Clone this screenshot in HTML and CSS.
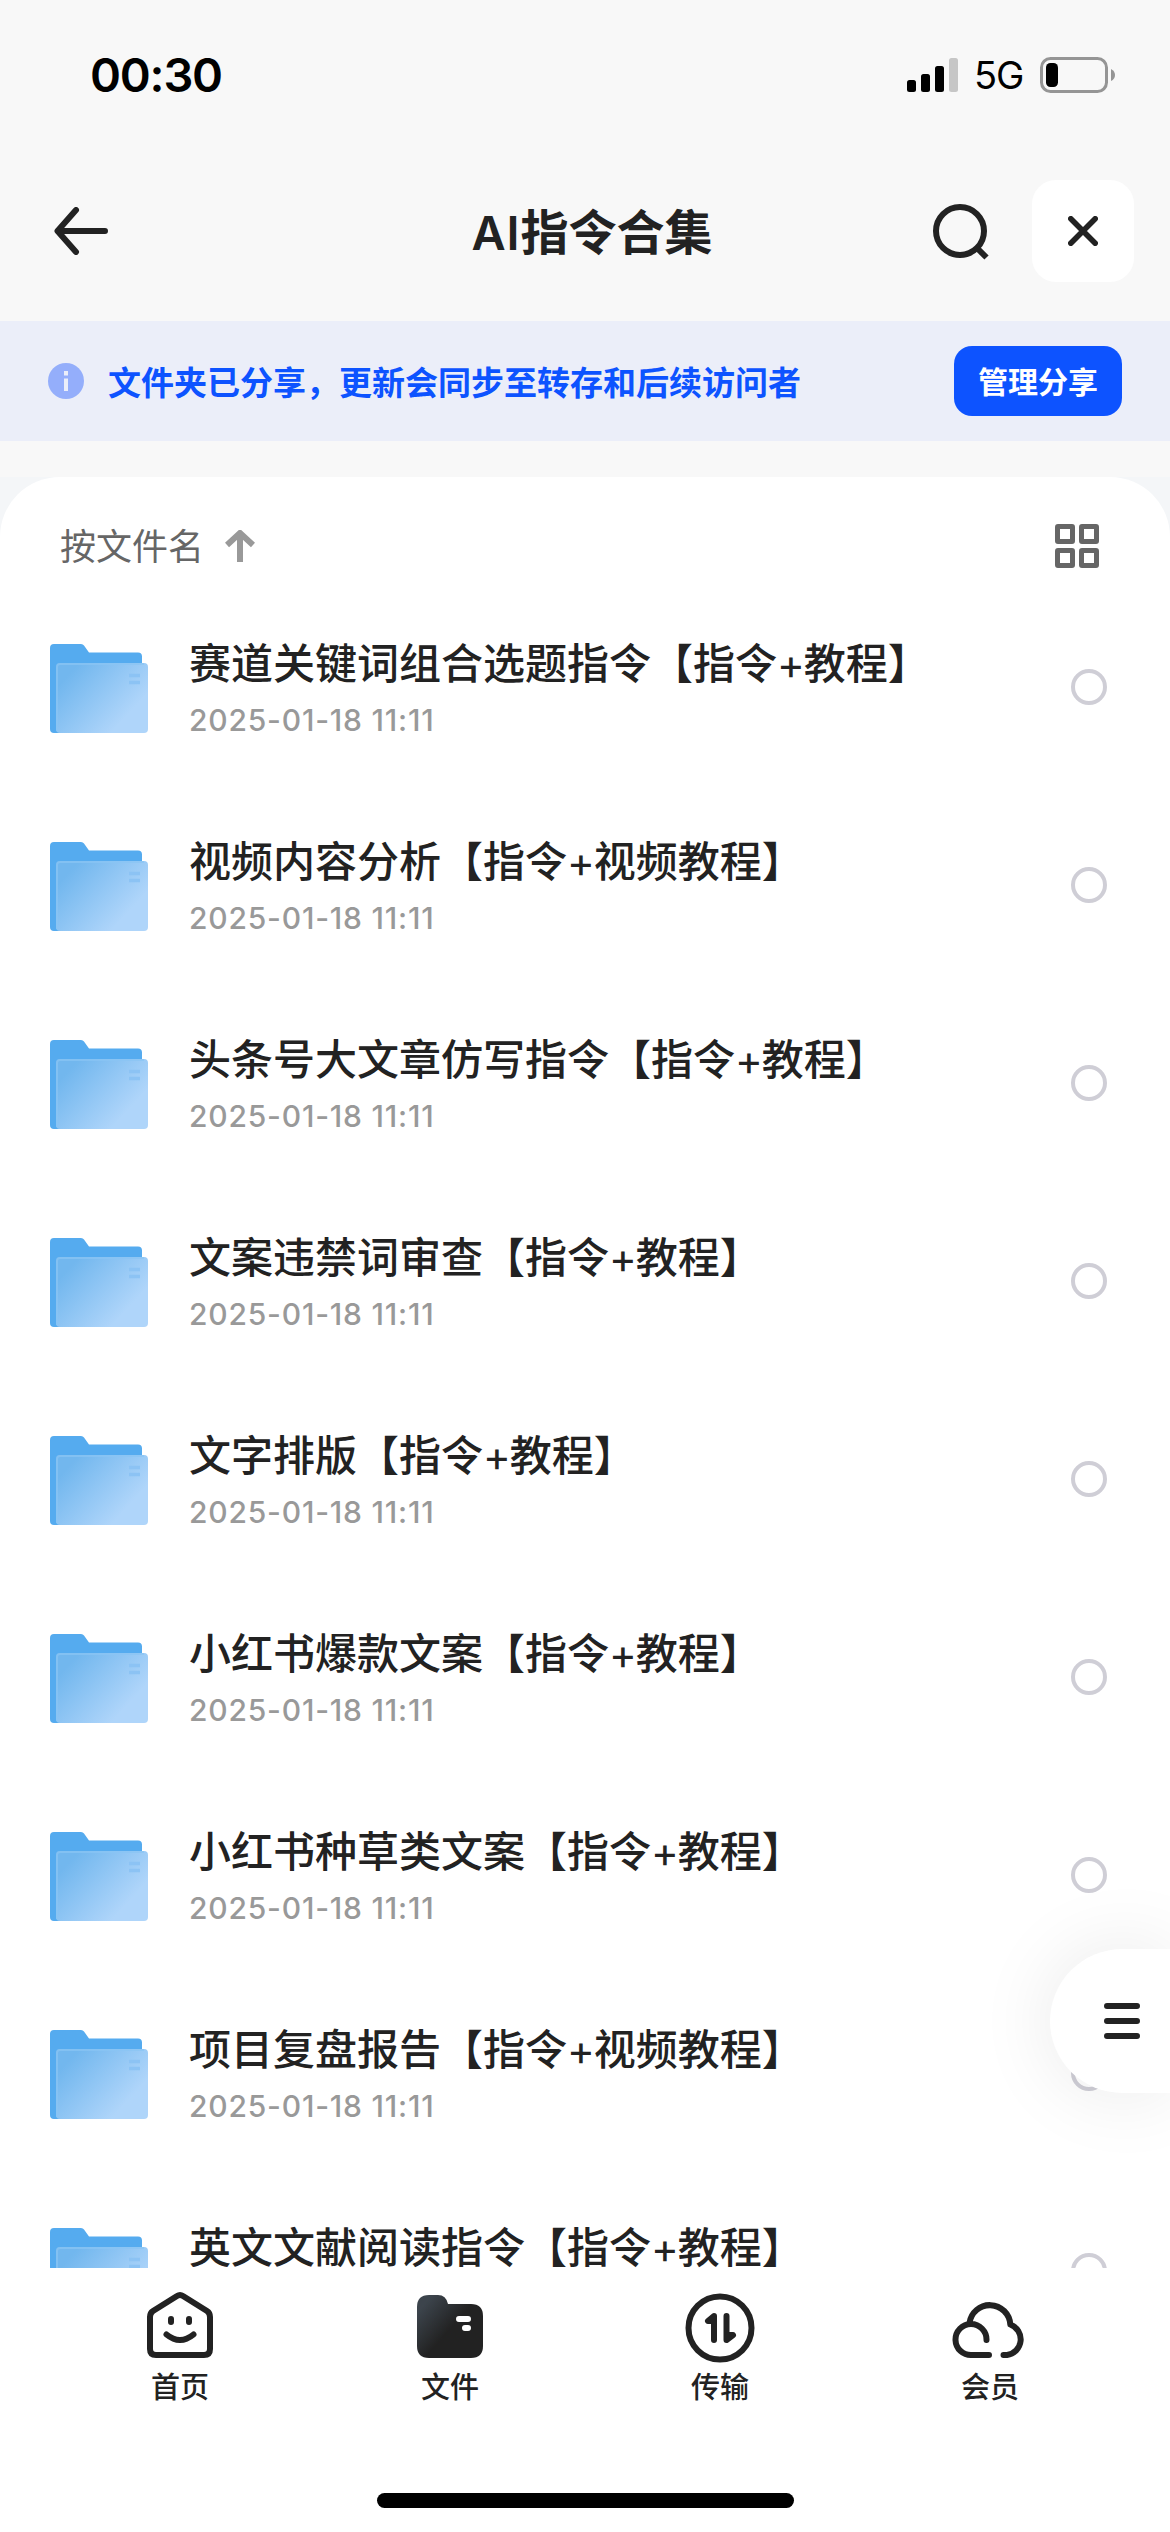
FILE: index.html
```html
<!doctype html>
<html lang="zh-CN">
  <head>
    <meta charset="UTF-8" />
    <meta name="viewport" content="width=device-width, initial-scale=1.0" />
    <title>AI指令合集</title>
    <link rel="stylesheet" href="styles.css">
  </head>
  <body>
    <!-- Iconos compartidos -->
    <svg class="sprite" width="0" height="0">
      <defs>
        <linearGradient id="folder-front" x1="0" y1="0.15" x2="1" y2="0.85">
          <stop offset="0.1" stop-color="#72b7ee"/>
          <stop offset="0.8" stop-color="#afd5fa"/>
        </linearGradient>
        <linearGradient id="files-dark" x1="0" y1="0.1" x2="0.6" y2="0.6">
          <stop offset="0.15" stop-color="#3c444c"/>
          <stop offset="0.85" stop-color="#222"/>
        </linearGradient>
      </defs>
      <symbol id="folder" viewBox="0 0 98 90">
        <path d="M0 4a4 4 0 0 1 4-4h27q2 0 3 1.500l5 7h49a4 4 0 0 1 4 4V60H10v29H4a4 4 0 0 1-4-4z" fill="#55abef"/>
        <rect x="6" y="19" width="92" height="70" rx="4" fill="url(#folder-front)"/>
        <path d="M7 87V23q0-3 3-3h84" fill="none" stroke="#8ac5f3" stroke-width="2" opacity="0.7"/>
        <path d="M79 31.500h11M79 38.500h11" stroke="#8cc3f4" stroke-width="3.500"/>
      </symbol>
    </svg>

    <div class="screen">
      <div class="status-bar">
        <span class="time">00:30</span>
        <div class="status-icons">
          <svg class="signal" viewBox="0 0 51 34">
            <rect x="0" y="22" width="9" height="12" rx="2.500"/>
            <rect x="14" y="16" width="9" height="18" rx="2.500"/>
            <rect x="28" y="8" width="9" height="26" rx="2.500"/>
            <rect x="42" y="0" width="9" height="34" rx="2.500" fill="#c6c6c6"/>
          </svg>
          <span class="network">5G</span>
          <svg class="battery" viewBox="0 0 75 36">
            <rect x="1.500" y="1.500" width="65" height="33" rx="9" fill="none" stroke="#959595" stroke-width="3"/>
            <rect x="6" y="6" width="12" height="24" rx="4.500"/>
            <path d="M71 12q4 2 4 6t-4 6z" fill="#959595"/>
          </svg>
        </div>
      </div>

      <header class="header">
        <svg class="back" viewBox="0 0 54 48">
          <path d="M51 24H4M22 3L3.500 24 22 45" fill="none" stroke="#222" stroke-width="6" stroke-linecap="round" stroke-linejoin="round"/>
        </svg>
        <h1 class="title"><span class="latin">AI</span>指令合集</h1>
        <div class="actions">
          <svg class="search" viewBox="0 0 60 60">
            <circle cx="28" cy="30" r="24" fill="none" stroke="#222" stroke-width="6"/>
            <path d="M44.500 46.500l10 10" stroke="#222" stroke-width="6"/>
          </svg>
          <div class="close">
            <svg viewBox="0 0 30 30">
              <path d="M2.800 2.800l24.400 24.400M27.200 2.800L2.800 27.200" stroke="#222" stroke-width="5.600" stroke-linecap="round"/>
            </svg>
          </div>
        </div>
      </header>

      <div class="banner">
        <svg class="info" viewBox="0 0 36 36">
          <circle cx="18" cy="18" r="18" fill="#94aefb"/>
          <path d="M16 8h4v4.500h-4zM16 15.500h4V28h-4z" fill="#ebeef9"/>
        </svg>
        <span class="banner-text">文件夹已分享，更新会同步至转存和后续访问者</span>
        <button class="manage">管理分享</button>
      </div>

      <main class="panel-wrap">
        <div class="panel">
          <div class="toolbar">
            <span class="sort">按文件名</span>
            <svg class="sort-arrow" viewBox="0 0 30 32">
              <path d="M15 32V4M2 15L15 3l13 12" fill="none" stroke="#999" stroke-width="6"/>
            </svg>
            <svg class="grid" viewBox="0 0 44 44">
              <g fill="none" stroke="#666" stroke-width="5">
                <rect x="2.500" y="2.500" width="15" height="15" rx="0.500"/>
                <rect x="26.500" y="2.500" width="15" height="15" rx="0.500"/>
                <rect x="2.500" y="26.500" width="15" height="15" rx="0.500"/>
                <rect x="26.500" y="26.500" width="15" height="15" rx="0.500"/>
              </g>
            </svg>
          </div>

          <ul class="list">
            <li class="row">
              <svg class="folder"><use href="#folder"/></svg>
              <div class="info-col"><p class="name">赛道关键词组合选题指令【指令<span class="plus">+</span>教程】</p><p class="date">2025-01-18 11:11</p></div>
              <span class="check"></span>
            </li>
            <li class="row">
              <svg class="folder"><use href="#folder"/></svg>
              <div class="info-col"><p class="name">视频内容分析【指令<span class="plus">+</span>视频教程】</p><p class="date">2025-01-18 11:11</p></div>
              <span class="check"></span>
            </li>
            <li class="row">
              <svg class="folder"><use href="#folder"/></svg>
              <div class="info-col"><p class="name">头条号大文章仿写指令【指令<span class="plus">+</span>教程】</p><p class="date">2025-01-18 11:11</p></div>
              <span class="check"></span>
            </li>
            <li class="row">
              <svg class="folder"><use href="#folder"/></svg>
              <div class="info-col"><p class="name">文案违禁词审查【指令<span class="plus">+</span>教程】</p><p class="date">2025-01-18 11:11</p></div>
              <span class="check"></span>
            </li>
            <li class="row">
              <svg class="folder"><use href="#folder"/></svg>
              <div class="info-col"><p class="name">文字排版【指令<span class="plus">+</span>教程】</p><p class="date">2025-01-18 11:11</p></div>
              <span class="check"></span>
            </li>
            <li class="row">
              <svg class="folder"><use href="#folder"/></svg>
              <div class="info-col"><p class="name">小红书爆款文案【指令<span class="plus">+</span>教程】</p><p class="date">2025-01-18 11:11</p></div>
              <span class="check"></span>
            </li>
            <li class="row">
              <svg class="folder"><use href="#folder"/></svg>
              <div class="info-col"><p class="name">小红书种草类文案【指令<span class="plus">+</span>教程】</p><p class="date">2025-01-18 11:11</p></div>
              <span class="check"></span>
            </li>
            <li class="row">
              <svg class="folder"><use href="#folder"/></svg>
              <div class="info-col"><p class="name">项目复盘报告【指令<span class="plus">+</span>视频教程】</p><p class="date">2025-01-18 11:11</p></div>
              <span class="check"></span>
            </li>
            <li class="row">
              <svg class="folder"><use href="#folder"/></svg>
              <div class="info-col"><p class="name">英文文献阅读指令【指令<span class="plus">+</span>教程】</p></div>
              <span class="check"></span>
            </li>
          </ul>
        </div>
      </main>

      <!-- Botón flotante -->
      <div class="fab">
        <svg viewBox="0 0 36 36">
          <path d="M3 3h30M3 18h30M3 33h30" stroke="#222" stroke-width="6" stroke-linecap="round"/>
        </svg>
      </div>

      <nav class="tabs">
        <div class="tab">
          <svg viewBox="0 0 90 90">
            <g fill="none" stroke="#222" stroke-width="6" stroke-linecap="round" stroke-linejoin="round">
              <path d="M42 16q3-2 6 0l24 15q3 2 3 6v32q0 6-6 6H21q-6 0-6-6V37q0-4 3-6z"/>
              <path d="M31.500 54.500q13.500 11 27 0"/>
              <path d="M36 39v3M54 39v3"/>
            </g>
          </svg>
          <span>首页</span>
        </div>
        <div class="tab">
          <svg viewBox="0 0 90 90">
            <path d="M12 27q0-12 12-12h9q8 0 10 9h23q12 0 12 12v30q0 12-12 12H24q-12 0-12-12z" fill="url(#files-dark)"/>
            <path d="M54 39h9M60 48h3" stroke="#fff" stroke-width="6" stroke-linecap="round"/>
          </svg>
          <span>文件</span>
        </div>
        <div class="tab">
          <svg viewBox="0 0 90 90">
            <circle cx="45" cy="48" r="31.500" fill="none" stroke="#222" stroke-width="6"/>
            <g fill="#222" stroke="#222" stroke-width="6" stroke-linecap="round" stroke-linejoin="round">
              <path d="M39 60V36l-6 5h6" />
              <path d="M51.500 36v24l6.500-5h-6.500" />
            </g>
          </svg>
          <span>传输</span>
        </div>
        <div class="tab">
          <svg viewBox="0 0 90 90">
            <path d="M44 75H27A15.500 15.500 0 1 1 41.500 60M24.500 43A20.500 20.500 0 0 1 65.300 44.500A15.800 15.800 0 0 1 62 75H58.500" fill="none" stroke="#222" stroke-width="6" stroke-linecap="round" stroke-linejoin="round"/>
          </svg>
          <span>会员</span>
        </div>
      </nav>
      <div class="home-indicator"></div>
    </div>
  </body>
</html>
```

FILE: styles.css
```css
* {
  margin: 0;
  padding: 0;
  box-sizing: border-box;
}

body {
  font-family: Inter, 'Noto Sans CJK SC', sans-serif;
  background: #fff;
  color: #222;
  overflow: hidden;
}

svg {
  display: block;
  flex-shrink: 0;
}

.sprite {
  position: absolute;
}

.screen {
  position: relative;
  width: 1170px;
  height: 2532px;
  background: #f8f8f8;
  display: flex;
  flex-direction: column;
  overflow: hidden;
}

/* Barra de estado */
.status-bar {
  height: 141px;
  padding: 8px 55px 0 90px;
  display: flex;
  align-items: center;
  justify-content: space-between;
  color: #000;
}

.time {
  font-size: 47px;
  font-weight: 600;
  line-height: 60px;
  letter-spacing: -1.2px;
}

.status-icons {
  display: flex;
  align-items: center;
}

.signal {
  width: 51px;
  height: 34px;
}

.network {
  width: 82px;
  padding-left: 16px;
  font-size: 38px;
  line-height: 40px;
  font-weight: 400;
  letter-spacing: -1px;
}

.battery {
  width: 75px;
  height: 36px;
}

/* Cabecera */
.header {
  height: 180px;
  padding: 0 36px 0 54px;
  display: grid;
  grid-template-columns: 1fr auto 1fr;
  align-items: center;
}

.back {
  width: 54px;
  height: 48px;
}

.title {
  padding: 3px 4px 0 0;
  font-size: 48px;
  font-weight: 600;
  line-height: 66px;
}

.title .latin {
  font-size: 47px;
  letter-spacing: 1px;
}

.actions {
  display: flex;
  align-items: center;
  justify-content: flex-end;
  gap: 40px;
}

.search {
  width: 60px;
  height: 60px;
}

.close {
  width: 102px;
  height: 102px;
  border-radius: 24px;
  background: #fff;
  display: flex;
  align-items: center;
  justify-content: center;
}

.close svg {
  width: 30px;
  height: 30px;
}

/* Aviso de carpeta compartida */
.banner {
  height: 120px;
  padding: 0 48px;
  background: #ebeef9;
  display: flex;
  align-items: center;
}

.info {
  width: 36px;
  height: 36px;
  margin-right: 24px;
}

.banner-text {
  flex: 1;
  padding-top: 3px;
  font-size: 33px;
  font-weight: 600;
  line-height: 48px;
  color: #0d53ff;
  white-space: nowrap;
}

.manage {
  width: 168px;
  height: 70px;
  padding-bottom: 2px;
  border: none;
  border-radius: 18px;
  background: #0d53ff;
  color: #fff;
  font-family: inherit;
  font-size: 30px;
  font-weight: 700;
}

/* Lista de archivos */
.panel-wrap {
  margin-top: 36px;
  height: 1791px;
  background: #f4f6f8;
  overflow: hidden;
}

.panel {
  height: 100%;
  border-radius: 60px 60px 0 0;
  background: #fff;
}

.toolbar {
  height: 138px;
  padding: 0 71px 0 60px;
  display: flex;
  align-items: center;
}

.sort {
  padding-top: 1px;
  font-size: 36px;
  line-height: 50px;
  color: #666;
}

.sort-arrow {
  width: 30px;
  height: 32px;
  margin-left: 21px;
}

.grid {
  width: 44px;
  height: 44px;
  margin-left: auto;
}

.list {
  list-style: none;
}

.row {
  height: 198px;
  padding: 28px 63px 0 50px;
  display: flex;
  align-items: flex-start;
}

.folder {
  width: 98px;
  height: 90px;
  margin-top: 1px;
}

.info-col {
  flex: 1;
  margin-left: 41px;
}

.name {
  padding-top: 1px;
  font-size: 42px;
  font-weight: 500;
  line-height: 40px;
  white-space: nowrap;
}

.name .plus {
  font-weight: 400;
  letter-spacing: -1px;
}

.date {
  margin-top: 16px;
  font-size: 30px;
  font-weight: 500;
  line-height: 40px;
  letter-spacing: 0.8px;
  color: #999;
}

.check {
  width: 36px;
  height: 36px;
  margin-top: 26px;
  border: 4px solid #cfced6;
  border-radius: 50%;
}

/* Flota sobre la lista */
.fab {
  position: absolute;
  top: 1949px;
  right: 0;
  width: 120px;
  height: 144px;
  padding-left: 54px;
  border-radius: 72px 0 0 72px;
  background: #fff;
  box-shadow: 0 0 80px rgba(0, 0, 0, 0.09);
  display: flex;
  align-items: center;
}

.fab svg {
  width: 36px;
  height: 36px;
}

/* Navegación inferior */
.tabs {
  position: relative;
  height: 225px;
  padding: 12px 45px 0;
  background: #fff;
  display: flex;
}

.tab {
  flex: 1;
  display: flex;
  flex-direction: column;
  align-items: center;
}

.tab svg {
  width: 90px;
  height: 90px;
}

.tab span {
  padding-top: 2px;
  font-size: 29px;
  font-weight: 500;
  line-height: 32px;
}

.home-indicator {
  position: relative;
  flex: 1;
  background: #fff;
}

.home-indicator::before {
  content: '';
  display: block;
  width: 417px;
  height: 15px;
  margin: 0 auto;
  border-radius: 8px;
  background: #000;
}
```
